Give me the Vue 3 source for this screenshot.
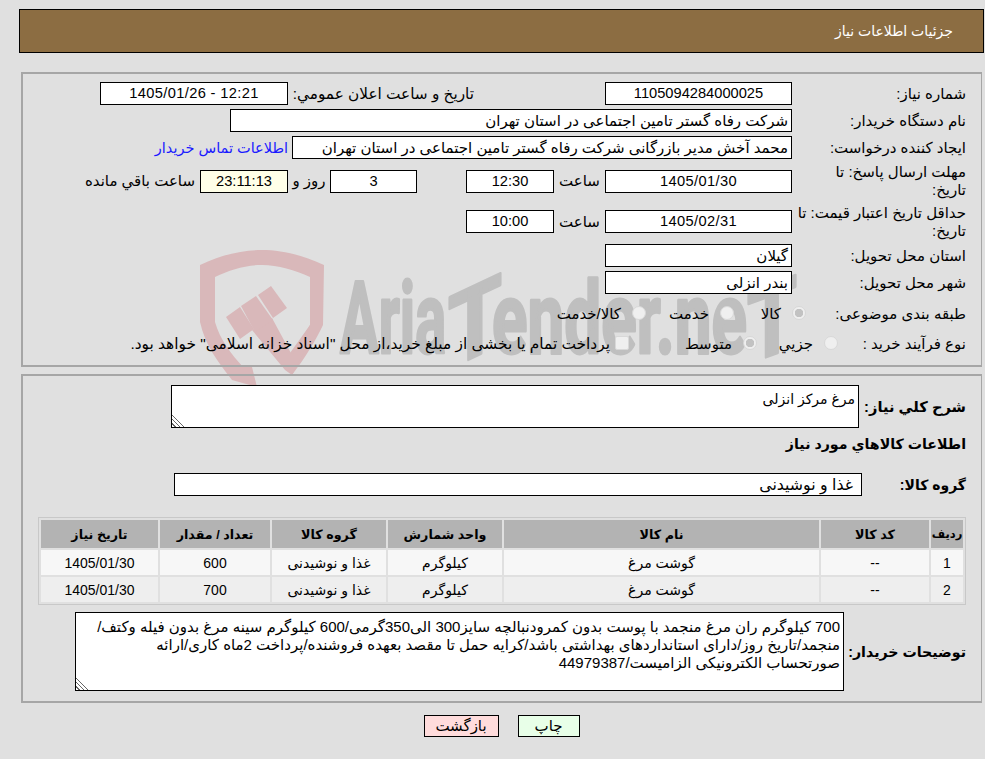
<template>
  <div class="page" dir="rtl">
    <svg class="watermark" viewBox="0 0 985 759" aria-hidden="true">
      <g fill="#d9b8ba">
        <path d="M200 265C225 253 245 250 262 250C280 250 300 254 324 265L323 325C316 340 305 358 292 375L285 360L310 325L310 277C295 270 278 265 262 265C245 265 230 270 215 277L215 322C220 340 232 355 243 367L252 367L257 387L232 380C218 362 205 345 200 322Z" />
        <polygon points="252,330 272,318 292,355 310,325 310,340 292,375 285,370" />
        <polygon points="226,317 240,307 254,329 240,339" />
        <polygon points="241,306 256,296 273,320 255,332" />
        <polygon points="258,295 271,286 287,308 273,318" />
      </g>
      <g class="wm-text" fill="#bfbfbf" stroke="#bfbfbf" stroke-width="3" stroke-linejoin="round">
        <text x="340" y="353" textLength="106" lengthAdjust="spacingAndGlyphs">Aria</text>
        <text x="448" y="353" textLength="54" lengthAdjust="spacingAndGlyphs" transform="translate(0 225) skewY(-25)">T</text>
        <text x="492" y="353" textLength="255" lengthAdjust="spacingAndGlyphs">ender.ne</text>
        <text x="747" y="353" textLength="50" lengthAdjust="spacingAndGlyphs" transform="translate(0 283) skewY(-20)">T</text>
      </g>
    </svg>

    <div class="content">
      <div class="title-bar">جزئیات اطلاعات نیاز</div>

      <section class="panel panel-top">
        <div class="row">
          <div class="label">شماره نیاز:</div>
          <div class="box w-187 num">1105094284000025</div>
          <div class="label-announce">تاریخ و ساعت اعلان عمومي:</div>
          <div class="box w-188 num date">12:21 - 1405/01/26</div>
        </div>
        <div class="row">
          <div class="label">نام دستگاه خریدار:</div>
          <div class="box w-buyer start">شرکت رفاه گستر تامین اجتماعی در استان تهران</div>
        </div>
        <div class="row">
          <div class="label">ایجاد کننده درخواست:</div>
          <div class="box w-creator start">محمد آخش مدیر بازرگانی شرکت رفاه گستر تامین اجتماعی در استان تهران</div>
          <a class="contact-link" href="#">اطلاعات تماس خریدار</a>
        </div>
        <div class="row row-tall">
          <div class="label">مهلت ارسال پاسخ: تا<br />تاریخ:</div>
          <div class="box w-187 num date">1405/01/30</div>
          <div class="unit">ساعت</div>
          <div class="box w-88 num">12:30</div>
          <div class="spacer"></div>
          <div class="box w-87 num">3</div>
          <div class="unit-days">روز و</div>
          <div class="box w-88 num remain">23:11:13</div>
          <div class="unit-left">ساعت باقي مانده</div>
        </div>
        <div class="row row-tall row-offer">
          <div class="label">حداقل تاریخ اعتبار قیمت: تا<br />تاریخ:</div>
          <div class="box w-187 num date">1405/02/31</div>
          <div class="unit">ساعت</div>
          <div class="box w-88 num">10:00</div>
        </div>
        <div class="row">
          <div class="label">استان محل تحویل:</div>
          <div class="box w-187 start">گیلان</div>
        </div>
        <div class="row">
          <div class="label">شهر محل تحویل:</div>
          <div class="box w-187 start">بندر انزلی</div>
        </div>
        <div class="row row-subject">
          <div class="label label-subject">طبقه بندی موضوعی:</div>
          <label class="opt opt-goods"><input type="radio" name="subject" disabled checked />کالا</label>
          <label class="opt opt-service"><input type="radio" name="subject" disabled />خدمت</label>
          <label class="opt"><input type="radio" name="subject" disabled />کالا/خدمت</label>
        </div>
        <div class="row row-process">
          <div class="label label-process">نوع فرآیند خرید :</div>
          <label class="opt opt-small"><input type="radio" name="process" disabled />جزيي</label>
          <label class="opt opt-medium"><input type="radio" name="process" disabled checked />متوسط</label>
          <label class="opt opt-check"><input type="checkbox" disabled />پرداخت تمام یا بخشی از مبلغ خرید،از محل "اسناد خزانه اسلامی" خواهد بود.</label>
        </div>
      </section>

      <section class="panel panel-bottom">
        <div class="row row-desc">
          <div class="label-bold label-desc">شرح كلي نياز:</div>
          <div class="area area-desc">مرغ مرکز انزلی</div>
        </div>
        <div class="goods-title">اطلاعات كالاهاي مورد نياز</div>
        <div class="row row-group">
          <div class="label-bold label-group">گروه كالا:</div>
          <div class="box w-group start group-value">غذا و نوشیدنی</div>
        </div>

        <table class="items">
          <thead>
            <tr>
              <th v-for="col in columns" :key="col.title" :style="{ width: col.width + 'px' }">{{ col.title }}</th>
            </tr>
          </thead>
          <tbody>
            <tr v-for="(item, i) in items" :key="i">
              <td>{{ i + 1 }}</td>
              <td>--</td>
              <td>{{ item.name }}</td>
              <td>{{ item.unit }}</td>
              <td>{{ item.group }}</td>
              <td>{{ item.qty }}</td>
              <td>{{ item.date }}</td>
            </tr>
          </tbody>
        </table>

        <div class="row row-notes">
          <div class="label-bold label-notes">توضیحات خريدار:</div>
          <div class="area area-notes">700 کیلوگرم ران مرغ منجمد با پوست بدون کمرودنبالچه سایز300 الی350گرمی/600 کیلوگرم سینه مرغ بدون فیله وکتف/<br />منجمد/تاریخ روز/دارای استانداردهای بهداشتی باشد/کرایه حمل تا مقصد بعهده فروشنده/پرداخت 2ماه کاری/ارائه<br />صورتحساب الکترونیکی الزامیست/44979387</div>
        </div>
      </section>

      <div class="actions">
        <button class="btn btn-print" type="button">چاپ</button>
        <button class="btn btn-back" type="button">بازگشت</button>
      </div>
    </div>
  </div>
</template>

<script setup>
const columns = [
  { title: 'ردیف', width: 32 },
  { title: 'کد کالا', width: 108 },
  { title: 'نام کالا', width: 315 },
  { title: 'واحد شمارش', width: 114 },
  { title: 'گروه کالا', width: 114 },
  { title: 'تعداد / مقدار', width: 110 },
  { title: 'تاریخ نیاز', width: 117 }
]

const items = [
  { name: 'گوشت مرغ', unit: 'کیلوگرم', group: 'غذا و نوشیدنی', qty: 600, date: '1405/01/30' },
  { name: 'گوشت مرغ', unit: 'کیلوگرم', group: 'غذا و نوشیدنی', qty: 700, date: '1405/01/30' }
]
</script>

<style>
html, body { margin: 0; background: #e0e0e0; }
</style>

<style scoped>
.page { position: relative; width: 985px; height: 759px; overflow: hidden; background: #e0e0e0; font-family: "Liberation Sans", "DejaVu Sans", sans-serif; font-size: 15px; color: #000; }
.watermark { position: absolute; left: 0; top: 0; width: 985px; height: 759px; direction: ltr; }
.wm-text { font-family: Roboto, sans-serif; font-weight: 700; font-size: 100px; }
.content { position: relative; display: flex; flex-direction: column; padding: 9px 1px 0 19px; box-sizing: border-box; height: 759px; }

.title-bar { height: 42px; border: 1px solid #000; background: #8c6d42; color: #fff; line-height: 42px; padding-right: 30px; font-size: 14px; }

.panel { border: 1px solid #a6a6a6; border-width: 2px 1px 2px 2px; box-sizing: border-box; margin: 0 2px 0 2px; }
.panel-top { height: 295px; margin-top: 19px; padding: 8px 15px 0 0; }
.panel-bottom { height: 329px; margin-top: 7px; padding: 9px 15px 0 15px; }

.row { display: flex; align-items: center; min-height: 23px; margin-bottom: 4px; }
.row-tall { height: 36px; }
.row-offer { height: 37px; }
.row-offer .label { padding-top: 1px; }
.label { width: 172px; flex: none; margin-left: 2px; line-height: 18px; }
.box { height: 23px; box-sizing: border-box; border: 1px solid #000; background: #fff; line-height: 21px; flex: none; white-space: nowrap; overflow: hidden; }
.num { text-align: center; font-size: 14.67px; }
.date { letter-spacing: 0.35px; }
.start { padding-right: 3px; text-align: right; }
.w-187 { width: 187px; }
.w-188 { width: 188px; }
.w-88 { width: 88px; }
.w-87 { width: 87px; }
.w-buyer { width: 562px; }
.w-creator { width: 500px; }
.w-group { width: 688px; }
.remain { background: #ffffe8; }

.label-announce { width: 312px; flex: none; padding-right: 131px; box-sizing: border-box; white-space: nowrap; margin-left: 5px; font-size: 15.3px; }
.contact-link { margin-right: 4px; color: #1a1aff; text-decoration: none; white-space: nowrap; font-size: 14.5px; }
.unit { width: 51px; flex: none; text-align: center; }
.spacer { width: 49px; flex: none; }
.unit-days { width: 42px; flex: none; text-align: center; }
.unit-left { margin-right: 5px; white-space: nowrap; }

.row-subject { height: 31px; margin-bottom: 3px; }
.row-process { height: 24px; margin-bottom: 0; }
.label-subject { width: 156px; margin-left: 4px; }
.label-process { width: 124px; margin-left: 4px; }
.opt { display: flex; align-items: center; gap: 11px; white-space: nowrap; flex: none; }
.opt-goods { width: 72px; }
.opt-service { width: 88px; }
.opt-small { width: 81px; }
.opt-medium { width: 128px; }
.opt-check { gap: 5px; font-size: 15.4px; }
.opt input { appearance: none; margin: 0 0 2px; flex: none; width: 14px; height: 14px; box-sizing: border-box; background: #efefef; border: 1px solid #d8d8d8; }
.opt input[type="radio"] { border-radius: 50%; }
.opt input[type="checkbox"] { border-radius: 2px; }
.opt input:checked { background: radial-gradient(circle, #c2c2c2 0 4px, #efefef 4.5px); }

.label-bold { flex: none; font-weight: 700; font-size: 14.2px; white-space: nowrap; }
.area { box-sizing: border-box; border: 1px solid #000; background: #fff; overflow: hidden; resize: both; line-height: 18px; padding: 3px 3px 0; white-space: nowrap; }
.area::-webkit-resizer { background: linear-gradient(45deg, transparent 0 2px, #666 2px 3px, transparent 3px 5px, #666 5px 6px, transparent 6px 8px, #666 8px 9px, transparent 9px); }
.row-desc { margin-bottom: 0; }
.label-desc { width: 107px; font-size: 14.67px; }
.area-desc { width: 688px; height: 43px; padding-top: 4px; font-size: 14px; }
.goods-title { margin-top: 7px; font-weight: 700; font-size: 14.2px; line-height: 18px; height: 18px; }
.row-group { margin: 20px 0 0; }
.label-group { width: 104px; font-size: 14px; }
.group-value { padding-right: 8px; font-size: 15.8px; }

.items { margin: 21px 0 0; border: 1px solid #c8c8c8; border-spacing: 2px; width: 928px; table-layout: fixed; box-sizing: border-box; }
.items th { background: #b3b3b3; height: 28px; padding: 0; font-size: 12.7px; font-weight: 700; white-space: nowrap; }
.items th:first-child { font-size: 11.5px; }
.items td { height: 25px; padding: 0; text-align: center; font-size: 14px; }
.items tbody tr:nth-child(odd) td { background: #f7f7f7; }
.items tbody tr:nth-child(even) td { background: #eeeeee; }

.row-notes { margin: 7px 0 0; }
.label-notes { width: 122px; }
.area-notes { width: 769px; height: 79px; padding-top: 5px; }

.actions { display: flex; justify-content: center; gap: 19px; margin-top: 12px; }
.btn { height: 22px; box-sizing: border-box; border: 1px solid #000; padding: 0; font-family: inherit; font-size: 15px; color: #000; }
.btn-print { width: 62px; background: #e8ffe8; }
.btn-back { width: 75px; background: #ffdcdc; }
</style>
